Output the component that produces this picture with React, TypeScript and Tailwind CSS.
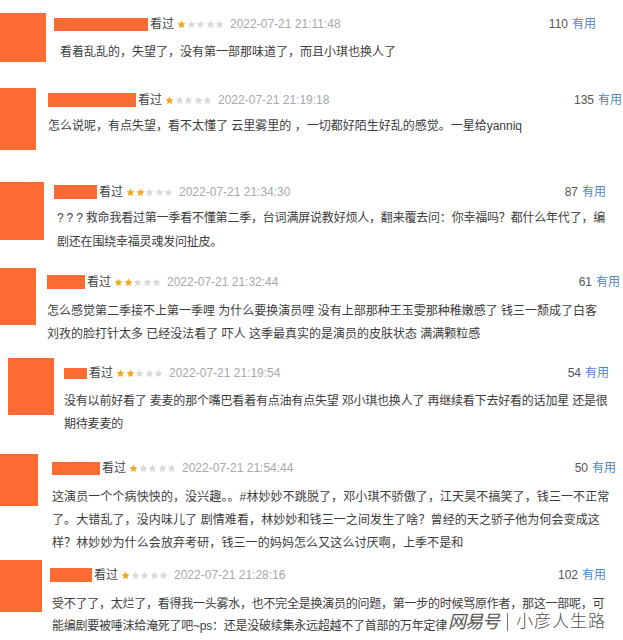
import React from 'react'

type Review = {
  row: string
  avatar: string
  body: string
  name: string
  stars: number
  date: string
  count: string
  text: string[]
  textCls: string
}

const reviews: Review[] = [
  {
    row: 'h-[80px]',
    avatar: 'ml-0 mt-[13px] w-[46px] h-[49px]',
    body: 'ml-[8px] pt-[16px] w-[542px]',
    name: 'w-[94px] h-[13px]',
    stars: 1,
    date: '2022-07-21 21:11:48',
    count: '110',
    text: ['看着乱乱的，失望了，没有第一部那味道了，而且小琪也换人了'],
    textCls: 'ml-[6px] mt-[8px] leading-[24px]',
  },
  {
    row: 'h-[90px]',
    avatar: 'ml-0 mt-[8px] w-[36px] h-[62px]',
    body: 'ml-[12px] pt-[12px] w-[574px]',
    name: 'w-[88px] h-[14px]',
    stars: 1,
    date: '2022-07-21 21:19:18',
    count: '135',
    text: ['怎么说呢，有点失望，看不太懂了 云里雾里的 ，一切都好陌生好乱的感觉。一星给yanniq'],
    textCls: 'ml-0 mt-[6px] leading-[24px]',
  },
  {
    row: 'h-[90px]',
    avatar: 'ml-0 mt-[12px] w-[44px] h-[58px]',
    body: 'ml-[10px] pt-[14px] w-[552px]',
    name: 'w-[43px] h-[14px]',
    stars: 2,
    date: '2022-07-21 21:34:30',
    count: '87',
    text: [
      '? ? ? 救命我看过第一季看不懂第二季，台词满屏说教好烦人，翻来覆去问：你幸福吗？都什么年代了，编',
      '剧还在围绕幸福灵魂发问扯皮。',
    ],
    textCls: 'ml-[3px] mt-[6px] leading-[24px] tracking-[-0.2px]',
  },
  {
    row: 'h-[90px]',
    avatar: 'ml-0 mt-[8px] w-[36px] h-[57px]',
    body: 'ml-[11px] pt-[14px] w-[573px]',
    name: 'w-[38px] h-[14px]',
    stars: 2,
    date: '2022-07-21 21:32:44',
    count: '61',
    text: [
      '怎么感觉第二季接不上第一季哩 为什么要换演员哩 没有上部那种王玉雯那种稚嫩感了 钱三一颓成了白客',
      '刘孜的脸打针太多 已经没法看了 吓人 这季最真实的是演员的皮肤状态 满满颗粒感',
    ],
    textCls: 'ml-0 mt-[10px] leading-[23px]',
  },
  {
    row: 'h-[100px]',
    avatar: 'ml-[8px] mt-[8px] w-[46px] h-[57px]',
    body: 'ml-[10px] pt-[15px] w-[545px]',
    name: 'w-[23px] h-[11px]',
    stars: 2,
    date: '2022-07-21 21:19:54',
    count: '54',
    text: [
      '没有以前好看了 麦麦的那个嘴巴看着有点油有点失望 邓小琪也换人了 再继续看下去好看的话加星 还是很',
      '期待麦麦的',
    ],
    textCls: 'ml-0 mt-[9px] leading-[23px] tracking-[-0.2px]',
  },
  {
    row: 'h-[100px]',
    avatar: 'ml-0 mt-[4px] w-[38px] h-[52px]',
    body: 'ml-[14px] pt-[10px] w-[564px]',
    name: 'w-[48px] h-[13px]',
    stars: 1,
    date: '2022-07-21 21:54:44',
    count: '50',
    text: [
      '这演员一个个病怏怏的，没兴趣。。#林妙妙不跳脱了，邓小琪不骄傲了，江天昊不搞笑了，钱三一不正常',
      '了。大错乱了，没内味儿了 剧情难看，林妙妙和钱三一之间发生了啥？曾经的天之骄子他为何会变成这',
      '样？林妙妙为什么会放弃考研，钱三一的妈妈怎么又这么讨厌啊，上季不是和',
    ],
    textCls: 'ml-0 mt-[10px] leading-[23px] tracking-[0.1px]',
  },
  {
    row: 'h-[90px]',
    avatar: 'ml-0 mt-[10px] w-[42px] h-[52px]',
    body: 'ml-[8px] pt-[17px] w-[556px]',
    name: 'w-[42px] h-[14px]',
    stars: 1,
    date: '2022-07-21 21:28:16',
    count: '102',
    text: [
      '受不了了，太烂了，看得我一头雾水，也不完全是换演员的问题，第一步的时候骂原作者，那这一部呢，可',
      '能编剧要被唾沫给淹死了吧~ps：还是没破续集永远超越不了首部的万年定律',
    ],
    textCls: 'ml-[2px] mt-[10px] leading-[22px] tracking-[-0.25px]',
  },
]

const Star = ({ on }: { on: boolean }) => (
  <svg width="9" height="9" viewBox="0 0 24 24">
    <path
      d="M12 1.5l3.2 6.6 7.2 1-5.2 5.1 1.3 7.2L12 18 5.5 21.4l1.3-7.2L1.6 9.1l7.2-1z"
      fill={on ? '#f6a623' : '#d9d9d9'}
    />
  </svg>
)

const ReviewRow = ({ r }: { r: Review }) => (
  <div className={`flex items-start ${r.row}`}>
    <div className={`shrink-0 bg-[#fd6a32] ${r.avatar}`} />
    <div className={`flex flex-col ${r.body}`}>
      <div className="flex items-center h-[16px] text-[12px] leading-[16px]">
        <div className={`bg-[#fd6a32] ${r.name}`} />
        <span className="ml-[2px] text-[#444]">看过</span>
        <span className="ml-[3px] flex gap-[0.5px]">
          {[0, 1, 2, 3, 4].map((i) => (
            <Star key={i} on={i < r.stars} />
          ))}
        </span>
        <span className="ml-[6px] text-[#a8a8a8]">{r.date}</span>
        <span className="ml-auto text-[#555]">{r.count}</span>
        <span className="ml-[4px] text-[#4f86c6]">有用</span>
      </div>
      <div className={`text-[12px] text-[#3c3c3c] ${r.textCls}`}>
        {r.text.map((t, i) => (
          <div key={i} className="whitespace-nowrap">
            {t}
          </div>
        ))}
      </div>
    </div>
  </div>
)

export default function App() {
  return (
    <div
      className="relative w-[623px] h-[640px] overflow-hidden bg-white"
      style={{ fontFamily: '"Liberation Sans", "Noto Sans CJK SC", sans-serif' }}
    >
      <div className="flex flex-col">
        {reviews.map((r, i) => (
          <ReviewRow key={i} r={r} />
        ))}
      </div>

      {/* watermark */}
      <div className="absolute left-[448px] top-[610px] flex items-center text-[#555] leading-[24px]">
        <span className="text-[18px] tracking-[-1px] italic">网易号</span>
        <span className="mx-[8px] h-[18px] w-px bg-[#777]" />
        <span className="text-[17px] tracking-[1px] font-light">小彦人生路</span>
      </div>
    </div>
  )
}
